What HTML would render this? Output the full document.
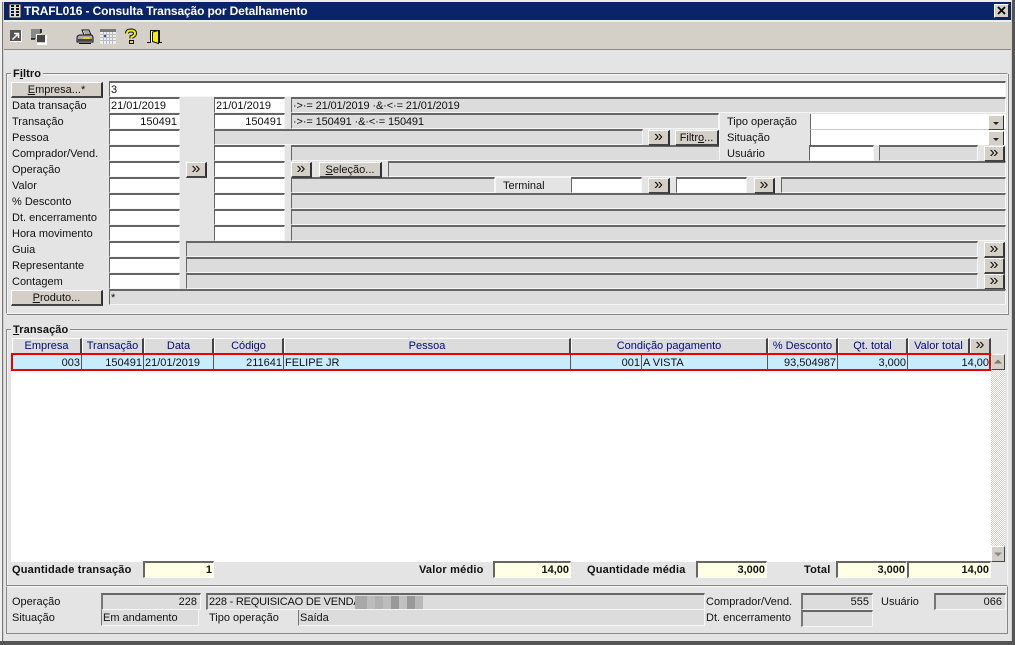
<!DOCTYPE html>
<html><head><meta charset="utf-8"><style>
html,body{margin:0;padding:0}
body{width:1015px;height:645px;overflow:hidden;position:relative;background:#d4d0c8;font:11px/14px "Liberation Sans",sans-serif;color:#111}
div,span.a{position:absolute;box-sizing:border-box;white-space:nowrap}
.f{height:16px;border-top:2px solid #666;border-left:1px solid #666;border-right:1px solid #f6f6f6;border-bottom:1px solid #f6f6f6;background:#fff;padding:0 2px 0 1px;line-height:15px;overflow:hidden}
.g{background:#dcdcdc}
.r{text-align:right}
.l{height:14px;line-height:16px}
.b{background:#d4d0c8;border-top:1px solid #fff;border-left:1px solid #fff;border-right:2px solid #333;border-bottom:2px solid #444;text-align:center;line-height:15px;height:16px}
.m{font-size:16px;line-height:11px}
.h{top:338px;height:16px;background:#dcdcdc;border-top:1px solid #fff;border-left:1px solid #fff;border-right:2px solid #444;border-bottom:1px solid #888;text-align:center;color:#000a80;line-height:15px}
.c{top:355px;height:15px;line-height:16px;border-right:1px solid #555;padding:0 1px;overflow:hidden}
.y{height:17px;border-top:2px solid #666;border-left:2px solid #666;border-right:1px solid #fff;border-bottom:1px solid #fff;background:#ffffe6;text-align:right;padding:0 1px 0 2px;font-weight:bold;line-height:15px}
.t{font-weight:bold;height:14px;line-height:16px;letter-spacing:.2px}
.v{height:17px;border-top:2px solid #666;border-left:2px solid #777;border-right:1px solid #f6f6f6;border-bottom:1px solid #f6f6f6;background:#dcdcdc;padding:0 3px 0 1px;line-height:15px;overflow:hidden}
.w{height:16px;border-top:0;border-left:1px solid #777;line-height:17px}
.n{letter-spacing:-.12px}
u{text-decoration:underline}
</style></head><body>
<div style="left:0;top:0;width:1015px;height:2px;background:#eee"></div>
<div style="left:0;top:0;width:2px;height:645px;background:#eee"></div>
<div style="left:2px;top:2px;width:1px;height:640px;background:#777"></div>
<div style="left:1012px;top:0;width:3px;height:645px;background:#555"></div>
<div style="left:0;top:641px;width:1015px;height:4px;background:#555"></div>
<div style="left:4px;top:2px;width:1007px;height:18px;background:#0a246a"></div>
<svg style="position:absolute;left:7px;top:3px" width="16" height="16"><rect x="2" y="1" width="12" height="14" fill="#ddd" stroke="#222"/><path d="M4 3h3M9 3h3M4 6h3M9 6h3M4 9h3M9 9h3M4 12h3M9 12h3" stroke="#111" stroke-width="2"/></svg>
<div style="left:24px;top:4px;height:14px;color:#fff;font-weight:bold;font-size:12px;line-height:14px;letter-spacing:-.13px">TRAFL016 - Consulta Transação por Detalhamento</div>
<div style="left:994px;top:4px;width:15px;height:14px;background:#d4d0c8;border-top:1px solid #fff;border-left:1px solid #fff;border-right:1px solid #222;border-bottom:1px solid #222"><svg style="position:absolute;left:2px;top:1px" width="10" height="10"><path d="M1 1L8 8M8 1L1 8" stroke="#000" stroke-width="1.8"/></svg></div>
<div style="left:4px;top:22px;width:1007px;height:28px;background:#d4d0c8;border-bottom:1px solid #888"></div>
<div style="left:4px;top:20px;width:1007px;height:2px;background:#eee"></div>
<svg style="position:absolute;left:8px;top:28px" width="16" height="16"><rect x="2" y="2" width="11" height="11" fill="#555"/><path d="M13 2h1v12H2v-1h11z" fill="#fff"/><path d="M4.500 11.500l5-5M6 5.500h4.500v4.500" stroke="#fff" stroke-width="1.500" fill="none"/></svg>
<svg style="position:absolute;left:30px;top:28px" width="17" height="17"><rect x="1" y="1" width="10" height="10" fill="#888"/><rect x="6" y="6" width="5" height="5" fill="#fff"/><path d="M11 1v4M1 11h4" stroke="#111" stroke-width="1.500"/><rect x="7" y="7" width="8" height="7" fill="#444"/><path d="M16 7v9H7" stroke="#fff" stroke-width="2" fill="none"/></svg>
<svg style="position:absolute;left:76px;top:28px" width="18" height="17"><path d="M6 2h7l2 5H8z" fill="#eee" stroke="#111"/><path d="M8 4h5M9 6h5" stroke="#666"/><path d="M1 10q0-3 3-3h11q2 0 2 3v4H1z" fill="#aaa" stroke="#111"/><rect x="7" y="9" width="7" height="2" fill="#e6d800"/><path d="M2 12h14" stroke="#222" stroke-width="1.500"/><path d="M3 15.500h12" stroke="#111"/></svg>
<svg style="position:absolute;left:100px;top:28px" width="17" height="17"><rect x="0" y="1" width="16" height="15" fill="#eee"/><rect x="0" y="1" width="16" height="3" fill="#777"/><path d="M3.500 4v12M6.500 4v12M9.500 4v12M12.500 4v12M0 6.500h16M0 9.500h16M0 12.500h16" stroke="#bbb"/><rect x="4" y="7" width="2" height="2" fill="#06c"/></svg>
<svg style="position:absolute;left:124px;top:28px" width="14" height="17"><path d="M3 5.500Q3 2.500 7 2.500T11 5.500Q11 7.500 7.500 9V10.500" fill="none" stroke="#111" stroke-width="4"/><path d="M3 5.500Q3 2.500 7 2.500T11 5.500Q11 7.500 7.500 9V10.500" fill="none" stroke="#f0e800" stroke-width="2"/><rect x="5.500" y="12.500" width="4" height="3" fill="#f0e800" stroke="#111"/></svg>
<svg style="position:absolute;left:147px;top:28px" width="16" height="17"><path d="M3.500 14V2.500h9V14" fill="#fff" stroke="#111"/><path d="M5.500 4l6-1.500v13l-6-2z" fill="#f4ee00" stroke="#111"/><path d="M0 14.500h4M11 14.500h4" stroke="#111"/></svg>
<div style="left:4px;top:50px;width:1007px;height:591px;background:#e4e4e4"></div>

<div style="left:6px;top:73px;width:1002px;height:241px;border:1px solid #888;border-right-color:#f4f4f4;border-bottom-color:#f4f4f4;box-shadow:inset 1px 1px 0 #f4f4f4,1px 1px 0 #888"></div>
<div class="t" style="left:11px;top:66px;background:#e4e4e4;padding:0 2px;letter-spacing:.1px">F<u>i</u>ltro</div>

<div class="b" style="left:11px;top:82px;width:92px"><u>E</u>mpresa...*</div>
<div class="f" style="left:109px;top:81px;width:897px">3</div>
<div class="l" style="left:12px;top:98px">Data transação</div>
<div class="l" style="left:12px;top:114px">Transação</div>
<div class="l" style="left:12px;top:130px">Pessoa</div>
<div class="l" style="left:12px;top:146px">Comprador/Vend.</div>
<div class="l" style="left:12px;top:162px">Operação</div>
<div class="l" style="left:12px;top:178px">Valor</div>
<div class="l" style="left:12px;top:194px">% Desconto</div>
<div class="l" style="left:12px;top:210px">Dt. encerramento</div>
<div class="l" style="left:12px;top:226px">Hora movimento</div>
<div class="l" style="left:12px;top:242px">Guia</div>
<div class="l" style="left:12px;top:258px">Representante</div>
<div class="l" style="left:12px;top:274px">Contagem</div>

<div class="f" style="left:109px;top:97px;width:71px">21/01/2019</div>
<div class="f r" style="left:109px;top:113px;width:71px">150491</div>
<div class="f" style="left:109px;top:129px;width:71px"></div>
<div class="f" style="left:109px;top:145px;width:71px"></div>
<div class="f" style="left:109px;top:161px;width:71px"></div>
<div class="f" style="left:109px;top:177px;width:71px"></div>
<div class="f" style="left:109px;top:193px;width:71px"></div>
<div class="f" style="left:109px;top:209px;width:71px"></div>
<div class="f" style="left:109px;top:225px;width:71px"></div>
<div class="f" style="left:109px;top:241px;width:71px"></div>
<div class="f" style="left:109px;top:257px;width:71px"></div>
<div class="f" style="left:109px;top:273px;width:71px"></div>

<div class="f" style="left:214px;top:97px;width:71px">21/01/2019</div>
<div class="f r" style="left:214px;top:113px;width:71px">150491</div>
<div class="f" style="left:214px;top:145px;width:71px"></div>
<div class="f" style="left:214px;top:161px;width:71px"></div>
<div class="f" style="left:214px;top:177px;width:71px"></div>
<div class="f" style="left:214px;top:193px;width:71px"></div>
<div class="f" style="left:214px;top:209px;width:71px"></div>
<div class="f" style="left:214px;top:225px;width:71px"></div>
<div class="f g" style="left:214px;top:129px;width:429px"></div>

<div class="b m" style="left:186px;top:162px;width:21px">»</div>

<div class="f g n" style="left:291px;top:97px;width:715px">·&gt;·= 21/01/2019 ·&amp;·&lt;·= 21/01/2019</div>
<div class="f g n" style="left:291px;top:113px;width:428px">·&gt;·= 150491 ·&amp;·&lt;·= 150491</div>
<div class="f g" style="left:291px;top:145px;width:715px"></div>
<div class="f g" style="left:291px;top:177px;width:204px"></div>
<div class="f g" style="left:291px;top:193px;width:715px"></div>
<div class="f g" style="left:291px;top:209px;width:715px"></div>
<div class="f g" style="left:291px;top:225px;width:715px"></div>
<div class="b m" style="left:291px;top:162px;width:21px">»</div>
<div class="b" style="left:319px;top:162px;width:63px"><u>S</u>eleção...</div>
<div class="f g" style="left:388px;top:161px;width:618px"></div>

<div class="b m" style="left:648px;top:130px;width:22px">»</div>
<div class="b" style="left:675px;top:130px;width:44px">Filtr<u>o</u>...</div>

<div style="left:719px;top:113px;width:90px;height:48px;background:#e4e4e4;border-left:1px solid #f6f6f6"></div>
<div class="l" style="left:727px;top:114px">Tipo operação</div>
<div class="l" style="left:727px;top:130px">Situação</div>
<div class="l" style="left:727px;top:146px">Usuário</div>
<div style="left:810px;top:114px;width:196px;height:16px;background:#fff;border-left:1px solid #666;border-bottom:1px solid #ccc"></div>
<div style="left:810px;top:130px;width:196px;height:16px;background:#fff;border-left:1px solid #666;border-bottom:1px solid #ccc"></div>
<div class="b" style="left:988px;top:115px;width:16px;height:15px;border-right:1px solid #333;border-bottom:1px solid #444"><svg style="position:absolute;left:3px;top:6px" width="8" height="4"><path d="M1 0h6L4 3z" fill="#222"/></svg></div>
<div class="b" style="left:988px;top:131px;width:16px;height:15px;border-right:1px solid #333;border-bottom:1px solid #444"><svg style="position:absolute;left:3px;top:6px" width="8" height="4"><path d="M1 0h6L4 3z" fill="#222"/></svg></div>
<div style="left:873px;top:145px;width:133px;height:16px;background:#e4e4e4"></div>
<div class="f" style="left:809px;top:145px;width:65px"></div>
<div class="f g" style="left:879px;top:145px;width:99px"></div>
<div class="b m" style="left:984px;top:146px;width:21px">»</div>

<div style="left:495px;top:177px;width:76px;height:16px;background:#e4e4e4;border-left:1px solid #f6f6f6;border-top:1px solid #f6f6f6"></div>
<div class="l" style="left:503px;top:178px">Terminal</div>
<div class="f" style="left:571px;top:177px;width:71px"></div>
<div style="left:642px;top:177px;width:140px;height:16px;background:#e4e4e4"></div>
<div class="b m" style="left:648px;top:178px;width:22px">»</div>
<div class="f" style="left:676px;top:177px;width:71px"></div>
<div class="b m" style="left:754px;top:178px;width:21px">»</div>
<div class="f g" style="left:781px;top:177px;width:225px"></div>

<div class="f g" style="left:186px;top:241px;width:792px"></div>
<div class="f g" style="left:186px;top:257px;width:792px"></div>
<div class="f g" style="left:186px;top:273px;width:792px"></div>
<div class="b m" style="left:984px;top:242px;width:21px">»</div>
<div class="b m" style="left:984px;top:258px;width:21px">»</div>
<div class="b m" style="left:984px;top:274px;width:21px">»</div>

<div class="b" style="left:11px;top:290px;width:92px"><u>P</u>roduto...</div>
<div class="f g" style="left:109px;top:289px;width:897px">*</div>

<div style="left:6px;top:329px;width:1002px;height:257px;border:1px solid #888;border-right-color:#f4f4f4;border-bottom:1px solid #888;box-shadow:inset 1px 1px 0 #f4f4f4"></div>
<div class="t" style="left:11px;top:322px;background:#e4e4e4;padding:0 2px;letter-spacing:.1px"><u>T</u>ransação</div>

<div class="h" style="left:12px;width:70px">Empresa</div>
<div class="h" style="left:82px;width:62px">Transação</div>
<div class="h" style="left:144px;width:70px">Data</div>
<div class="h" style="left:214px;width:70px">Código</div>
<div class="h" style="left:284px;width:287px">Pessoa</div>
<div class="h" style="left:571px;width:197px">Condição pagamento</div>
<div class="h" style="left:768px;width:70px">% Desconto</div>
<div class="h" style="left:838px;width:70px">Qt. total</div>
<div class="h" style="left:908px;width:62px">Valor total</div>
<div class="h m" style="left:970px;width:21px;color:#111;background:#d4d0c8;line-height:11px">»</div>

<div style="left:11px;top:354px;width:980px;height:208px;background:#fff"></div>
<div style="left:12px;top:354px;width:978px;height:16px;background:#c8ecff"></div>
<div class="c r" style="left:12px;width:70px">003</div>
<div class="c r" style="left:82px;width:62px">150491</div>
<div class="c" style="left:144px;width:70px">21/01/2019</div>
<div class="c r" style="left:214px;width:70px">211641</div>
<div class="c" style="left:284px;width:287px">FELIPE JR</div>
<div class="c r" style="left:571px;width:71px">001</div>
<div class="c" style="left:642px;width:126px">A VISTA</div>
<div class="c r" style="left:768px;width:70px">93,504987</div>
<div class="c r" style="left:838px;width:70px">3,000</div>
<div class="c r" style="left:908px;width:82px;border-right:0">14,00</div>
<div style="left:11px;top:353px;width:980px;height:18px;border:2px solid #ec0000"></div>

<svg style="position:absolute;left:991px;top:354px" width="14" height="208"><defs><pattern id="k" width="2" height="2" patternUnits="userSpaceOnUse"><rect width="2" height="2" fill="#fff"/><rect width="1" height="1" fill="#d4d0c8"/><rect x="1" y="1" width="1" height="1" fill="#d4d0c8"/></pattern></defs><rect width="14" height="208" fill="url(#k)"/></svg>
<div style="left:991px;top:354px;width:14px;height:16px;background:#d4d0c8;border-top:1px solid #fff;border-left:1px solid #fff;border-right:1px solid #444;border-bottom:1px solid #444"><svg style="position:absolute;left:2px;top:4px" width="9" height="6"><path d="M0 4.500h8L4 .5z" fill="#777"/></svg></div>
<div style="left:991px;top:546px;width:14px;height:16px;background:#d4d0c8;border-top:1px solid #fff;border-left:1px solid #fff;border-right:1px solid #444;border-bottom:1px solid #444"><svg style="position:absolute;left:2px;top:5px" width="9" height="6"><path d="M0 .5h8L4 4.500z" fill="#888"/></svg></div>

<div class="t" style="left:12px;top:562px">Quantidade transação</div>
<div class="y" style="left:143px;top:561px;width:71px">1</div>
<div class="t" style="left:419px;top:562px">Valor médio</div>
<div class="y" style="left:493px;top:561px;width:78px">14,00</div>
<div class="t" style="left:587px;top:562px">Quantidade média</div>
<div class="y" style="left:696px;top:561px;width:71px">3,000</div>
<div class="t" style="left:804px;top:562px">Total</div>
<div class="y" style="left:836px;top:561px;width:71px">3,000</div>
<div class="y" style="left:907px;top:561px;width:84px">14,00</div>

<div style="left:6px;top:586px;width:1002px;height:48px;border:1px solid #f4f4f4;border-right:1px solid #888;border-bottom:1px solid #888;border-left:1px solid #888"></div>
<div class="l" style="left:12px;top:594px">Operação</div>
<div class="l" style="left:12px;top:610px">Situação</div>
<div class="v r" style="left:101px;top:593px;width:100px">228</div>
<div class="v w" style="left:101px;top:610px;width:98px">Em andamento</div>
<div class="v" style="left:206px;top:593px;width:499px;letter-spacing:-.2px">228 - REQUISICAO DE VENDA</div>
<svg style="position:absolute;left:355px;top:596px" width="68" height="13"><rect width="12" height="13" fill="#a8a8a8"/><rect x="12" width="8" height="13" fill="#bcbcbc"/><rect x="20" width="8" height="13" fill="#b0b0b0"/><rect x="28" width="8" height="13" fill="#bcbcbc"/><rect x="36" width="8" height="13" fill="#999"/><rect x="44" width="8" height="13" fill="#c0c0c0"/><rect x="52" width="8" height="13" fill="#999"/><rect x="60" width="8" height="13" fill="#b8b8b8"/></svg>
<div class="l" style="left:209px;top:610px">Tipo operação</div>
<div class="v w" style="left:298px;top:610px;width:407px">Saída</div>
<div class="l" style="left:706px;top:594px">Comprador/Vend.</div>
<div class="l" style="left:706px;top:610px">Dt. encerramento</div>
<div class="v r" style="left:801px;top:593px;width:72px">555</div>
<div class="v" style="left:801px;top:610px;width:72px;height:17px"></div>
<div class="l" style="left:881px;top:594px">Usuário</div>
<div class="v r" style="left:934px;top:593px;width:72px">066</div>
</body></html>
